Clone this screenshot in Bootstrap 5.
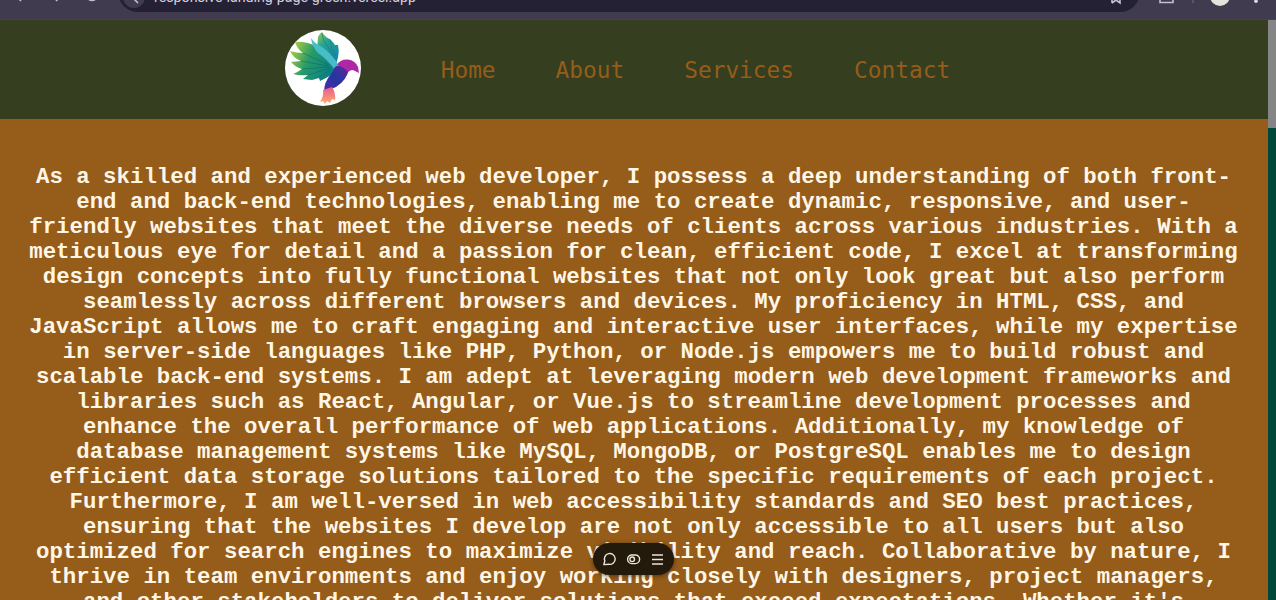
<!DOCTYPE html>
<html lang="en">
<head>
<meta charset="utf-8">
<meta name="viewport" content="width=device-width, initial-scale=1">
<title>Landing page</title>
<link href="https://cdn.jsdelivr.net/npm/bootstrap@5.3.0/dist/css/bootstrap.min.css" rel="stylesheet">
<style>
body{height:600px;background:#955c1a;font-family:"Liberation Mono",monospace}
.chrome{height:20px;background:#403b4e;border-bottom:1px solid #46463a;font-family:Roboto,sans-serif}
.chrome svg{display:block}
.site-head{height:98.5px;background:#353f20;padding-left:285px}
.logo{width:76px;height:76px;margin-top:-3px;margin-right:79.7px}
.site-head .nav-link{padding:2px 0 0;font:22.8px/30px "DejaVu Sans Mono",monospace;color:#955c1a;margin-right:60px}
.bio{margin:0 1px 0 0;padding-top:46.5px;font-size:22.39px;line-height:25.02px;font-weight:700;color:#fff6e6;white-space:nowrap}
.scroll{width:8px;background:#00483a}
.thumb{height:108px;background:#858585}
.tools{left:593px;top:543px;width:81px;height:32px;background:#231a0c;box-shadow:0 1px 4px #2a1a0899}
</style>
</head>
<body class="d-flex flex-column overflow-hidden position-relative">
<header class="chrome flex-shrink-0">
<svg width="1276" height="19" viewBox="0 0 1276 19">
<path d="M118-8a20 20 0 0 0 20 20h982a20 20 0 0 0 20-20z" fill="#252135"/>
<circle cx="134" cy="-3" r="11" fill="#403b4e"/>
<g fill="none" stroke="#c5c1cf" stroke-width="1.6"><path d="M17-3l4 4M60-3l-4 4M87-2q5 5 10 0M133-2l5 5M1112 3v-6M1112 3l4-3 4 3v-6M1160-4v6.5h13V-4"/></g>
<path d="M1193-2v5" stroke="#77718a"/>
<circle cx="1220" cy="-4" r="10" fill="#e6e3dc"/><circle cx="1256" cy="1.2" r="1.8" fill="#dedae6"/>
<text x="154" y="2" font-size="14.3" fill="#d3cfdb" textLength="262">responsive-landing-page-green.vercel.app</text>
</svg>
</header>
<div class="d-flex flex-grow-1" style="min-height:0">
<main class="flex-grow-1 overflow-hidden">
<nav class="site-head d-flex align-items-center">
<svg class="logo" viewBox="0 0 76 76">
<defs>
<linearGradient id="wing" x1="0" y1=".3" x2="1" y2=".7"><stop stop-color="#a9cb45"/><stop offset=".4" stop-color="#279b68"/><stop offset="1" stop-color="#087c8a"/></linearGradient>
<linearGradient id="upper" x1="0" y1="0" x2=".6" y2="1"><stop stop-color="#9dce4c"/><stop offset=".4" stop-color="#27a58c"/><stop offset="1" stop-color="#1586a8"/></linearGradient>
<linearGradient id="trunk" x1="1" y1="0" x2="0" y2="1"><stop stop-color="#6a2397"/><stop offset=".5" stop-color="#2436a0"/><stop offset="1" stop-color="#502bab"/></linearGradient>
<linearGradient id="tail" x1="0" y1="0" x2="0" y2="1"><stop stop-color="#e65a91"/><stop offset="1" stop-color="#ffad67"/></linearGradient>
</defs>
<circle cx="38" cy="38" r="38" fill="#fff"/>
<path d="M33 7Q34 4 37 2Q41 8 45 9Q49 13 50 15L53 15Q55 24 51 34L44 34L32 20Z" fill="url(#upper)"/>
<path d="M10 12Q21 11 33 17L51 33Q50 39 46 45L41 48L35 51L34 48L27 50L18 49L23 45Q15 46 8 44Q13 42 17 39Q10 37 6 32L16 31Q8 28 5 21Q12 23 18 23Q12 19 10 12Z" fill="url(#wing)"/>
<path d="M16 31L43 36M18 23L44 35M17 39L44 37M23 45L45 38M34 48L46 39" fill="none" stroke="#086b65" stroke-width=".9" opacity=".6"/>
<path d="M37 3Q38 12 44 18Q49 25 49 33M45 10Q46 19 51 26" fill="none" stroke="#137787" stroke-width="1" opacity=".6"/>
<path d="M26 8Q30 14 37 17Q46 23 53 34L50 40Q42 29 33 23Q27 17 26 8Z" fill="#48bdca"/>
<path d="M50 37Q53 34 57 36L64 39Q62 50 51 57L39 62Q39 52 46 44Z" fill="url(#trunk)"/>
<path d="M52 35Q55 29 63 29.5Q70 30 73 37L74 43L68 40Q65 40 63 42Q59 37 52 35Z" fill="#ae28a5"/>
<path d="M38 60L47 57Q51 63 50 70L47 69L45 73L42 71L40 74L38 71L35 72Q39 66 38 60Z" fill="url(#tail)"/>
</svg>
<a class="nav-link" href="#">Home</a><a class="nav-link" href="#">About</a><a class="nav-link" href="#">Services</a><a class="nav-link" href="#">Contact</a>
</nav>
<p class="bio text-center">As a skilled and experienced web developer, I possess a deep understanding of both front-<br>end and back-end technologies, enabling me to create dynamic, responsive, and user-<br>friendly websites that meet the diverse needs of clients across various industries. With a<br>meticulous eye for detail and a passion for clean, efficient code, I excel at transforming<br>design concepts into fully functional websites that not only look great but also perform<br>seamlessly across different browsers and devices. My proficiency in HTML, CSS, and<br>JavaScript allows me to craft engaging and interactive user interfaces, while my expertise<br>in server-side languages like PHP, Python, or Node.js empowers me to build robust and<br>scalable back-end systems. I am adept at leveraging modern web development frameworks and<br>libraries such as React, Angular, or Vue.js to streamline development processes and<br>enhance the overall performance of web applications. Additionally, my knowledge of<br>database management systems like MySQL, MongoDB, or PostgreSQL enables me to design<br>efficient data storage solutions tailored to the specific requirements of each project.<br>Furthermore, I am well-versed in web accessibility standards and SEO best practices,<br>ensuring that the websites I develop are not only accessible to all users but also<br>optimized for search engines to maximize visibility and reach. Collaborative by nature, I<br>thrive in team environments and enjoy working closely with designers, project managers,<br>and other stakeholders to deliver solutions that exceed expectations. Whether it's</p>
</main>
<div class="scroll flex-shrink-0"><div class="thumb"></div></div>
</div>
<div class="tools position-absolute rounded-pill">
<svg class="d-block" width="81" height="32" viewBox="0 0 81 32" fill="none" stroke="#e9e4da" stroke-width="1.4">
<path d="M10.8 21.6L11.8 18A5.4 5.4 0 1 1 16 21.3Z" stroke-linejoin="round"/>
<rect x="34.6" y="12" width="12" height="8.6" rx="4.3"/><circle cx="39.2" cy="16.3" r="2.3"/>
<path d="M59 12h11M59 16.5h11M59 21h11"/>
</svg>
</div>
<script src="https://cdn.jsdelivr.net/npm/bootstrap@5.3.0/dist/js/bootstrap.bundle.min.js"></script>
</body>
</html>
